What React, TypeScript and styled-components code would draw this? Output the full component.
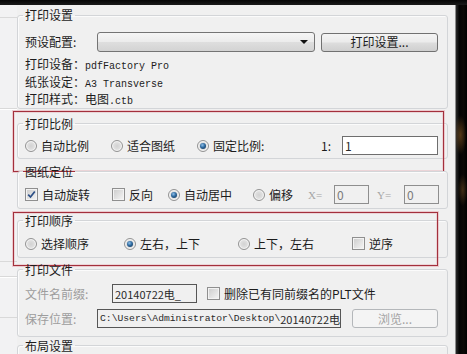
import styled, { createGlobalStyle, css } from 'styled-components'

const GlobalStyle = createGlobalStyle`
  html, body {
    margin: 0;
    padding: 0;
  }
  body {
    width: 467px;
    height: 354px;
    overflow: hidden;
    background: #f0f0f0;
    font-family: 'Noto Sans CJK SC', 'Noto Sans', sans-serif;
    font-size: 12px;
    line-height: 16px;
    color: #1c1c1c;
  }
`

const Page = styled.div`
  display: flex;
  flex-direction: column;
  height: 354px;
  overflow: hidden;
`

const TopBar = styled.div`
  flex: none;
  height: 5px;
  background: linear-gradient(#050505, #1a1a1a);
`

const Body = styled.div`
  flex: 1;
  display: flex;
  min-height: 0;
`

const LeftStrip = styled.div`
  flex: none;
  width: 17px;
  display: flex;
  flex-direction: column;
  background: #f2f2f3;
`

const LeftPanel = styled.div<{ $mt: number; $h: number }>`
  flex: none;
  margin-top: ${(p) => p.$mt}px;
  height: ${(p) => p.$h}px;
  border-top: 1px solid #d9d9d9;
  border-bottom: 1px solid #d9d9d9;
  box-shadow: 0 1px 0 #fff;
`

const Main = styled.div`
  flex: none;
  width: 431px;
  display: flex;
  flex-direction: column;
`

const Gutter = styled.div`
  flex: 1;
`

const RightEdge = styled.div`
  flex: none;
  width: 11px;
  border-left: 1px solid #8d8d8d;
  background:
    radial-gradient(ellipse 6px 20px at 40% 130px, rgba(150, 100, 40, 0.55), transparent),
    radial-gradient(ellipse 5px 16px at 60% 185px, rgba(130, 90, 40, 0.45), transparent),
    linear-gradient(to right, #2a2a2a, #030303 30%, #0b0805 70%, #000);
`

const Section = styled.div<{ $mt: number }>`
  position: relative;
  flex: none;
  margin-top: ${(p) => p.$mt}px;
`

const Group = styled.fieldset<{ $pt: number; $pb: number }>`
  margin: 0;
  min-width: 0;
  padding: ${(p) => p.$pt}px 7px ${(p) => p.$pb}px 7px;
  border: 1px solid #d3d5d8;
  border-radius: 3px;
  box-shadow: inset 1px 1px 0 #fbfbfb;
`

const Legend = styled.legend`
  margin-left: -2px;
  padding: 0 2px;
  height: 16px;
  line-height: 16px;
`

const Highlight = styled.div<{ $top: number; $w: number; $h: number }>`
  position: absolute;
  left: -4px;
  top: ${(p) => p.$top}px;
  width: ${(p) => p.$w}px;
  height: ${(p) => p.$h}px;
  box-sizing: border-box;
  border: 1px solid #a3303c;
  box-shadow: 0 0 0 1px rgba(226, 130, 140, 0.35), inset 0 0 0 1px rgba(226, 150, 160, 0.3);
  pointer-events: none;
`

const Row = styled.div<{ $h: number; $mt?: number }>`
  display: flex;
  align-items: center;
  height: ${(p) => p.$h}px;
  margin-top: ${(p) => p.$mt ?? 0}px;
`

const InfoList = styled.div`
  display: flex;
  flex-direction: column;
  margin-top: 3px;
`

const InfoRow = styled.div`
  height: 17.5px;
  line-height: 17.5px;
  overflow: hidden;
  white-space: nowrap;
`

const Label = styled.span<{ $w?: number; $dim?: boolean }>`
  flex: none;
  width: ${(p) => (p.$w ? `${p.$w}px` : 'auto')};
  color: ${(p) => (p.$dim ? '#9d9d9d' : 'inherit')};
  white-space: nowrap;
`

const Mono = styled.span`
  font-family: 'Liberation Mono', 'DejaVu Sans Mono', monospace;
  font-size: 10px;
  line-height: 1;
`

const Option = styled.label<{ $w?: number }>`
  flex: none;
  display: flex;
  align-items: center;
  gap: 4px;
  width: ${(p) => (p.$w ? `${p.$w}px` : 'auto')};
  white-space: nowrap;
`

const Radio = styled.span<{ $on?: boolean }>`
  flex: none;
  display: inline-flex;
  align-items: center;
  justify-content: center;
  width: 10px;
  height: 10px;
  border: 1px solid #939393;
  border-radius: 50%;
  background: radial-gradient(circle, #d2d2d2 0, #dedede 45%, #f6f6f6 100%);
  box-shadow: inset 0 0 0 1px #f4f4f4;
  ${(p) =>
    p.$on &&
    css`
      &::after {
        content: '';
        width: 6px;
        height: 6px;
        border-radius: 50%;
        background: radial-gradient(circle at 40% 35%, #8fc0ea 0, #2f6a9f 45%, #0f2c4a 100%);
      }
    `}
`

const Check = styled.span`
  flex: none;
  display: inline-flex;
  align-items: center;
  justify-content: center;
  width: 11px;
  height: 11px;
  border: 1px solid #8f8f8f;
  background: linear-gradient(135deg, #cbcbcb, #f6f6f6);
  box-shadow: inset 0 0 0 1px #f3f3f3;
`

const Combo = styled.div`
  flex: none;
  display: flex;
  align-items: center;
  justify-content: flex-end;
  box-sizing: border-box;
  width: 218px;
  height: 20px;
  padding-right: 6px;
  border: 1px solid #747474;
  border-radius: 3px;
  background: linear-gradient(#f5f5f5, #ececec 48%, #dedede 52%, #d3d3d3);
`

const Arrow = styled.span`
  width: 0;
  height: 0;
  border-left: 4px solid transparent;
  border-right: 4px solid transparent;
  border-top: 4px solid #111;
`

const Button = styled.div<{ $w: number; $disabled?: boolean; $ml?: number }>`
  flex: none;
  display: flex;
  align-items: center;
  justify-content: center;
  box-sizing: border-box;
  width: ${(p) => p.$w}px;
  height: 19px;
  margin-left: ${(p) => p.$ml ?? 0}px;
  border: 1px solid ${(p) => (p.$disabled ? '#b4b7ba' : '#717171')};
  border-radius: 3px;
  color: ${(p) => (p.$disabled ? '#a3a3a3' : '#1c1c1c')};
  background: ${(p) =>
    p.$disabled ? '#f4f4f4' : 'linear-gradient(#f4f4f4, #ebebeb 48%, #dddddd 52%, #cfcfcf)'};
`

const Field = styled.div<{ $w: number; $tone: 'white' | 'dim' | 'file'; $ml?: number; $mr?: number }>`
  flex: none;
  box-sizing: border-box;
  display: flex;
  align-items: center;
  width: ${(p) => p.$w}px;
  height: 19px;
  margin-left: ${(p) => p.$ml ?? 0}px;
  margin-right: ${(p) => p.$mr ?? 0}px;
  padding-left: 2px;
  overflow: hidden;
  white-space: nowrap;
  border: 1px solid ${(p) => (p.$tone === 'dim' ? '#8e8e8e' : p.$tone === 'file' ? '#565656' : '#6e6e6e')};
  background: ${(p) => (p.$tone === 'white' ? '#fff' : '#f0f0f0')};
  color: ${(p) => (p.$tone === 'dim' ? '#7a7a7a' : '#2a2a2a')};
`

const Axis = styled.span<{ $w: number; $ml?: number }>`
  flex: none;
  width: ${(p) => p.$w}px;
  margin-left: ${(p) => p.$ml ?? 0}px;
  font-family: 'Liberation Serif', 'DejaVu Serif', serif;
  font-size: 11px;
  color: #a5a5a5;
`

const PathMono = styled.span`
  font-family: 'Liberation Mono', 'DejaVu Sans Mono', monospace;
  font-size: 9.7px;
  color: #2a2a2a;
`

const FileText = styled.span`
  font-size: 11px;
`

const Spacer = styled.span`
  flex: 1;
`

const CheckMark = () => (
  <svg width="9" height="9" viewBox="0 0 9 9">
    <path d="M1.2 4.6 L3.5 7 L7.8 1.4" fill="none" stroke="#2c4f86" strokeWidth="1.7" />
  </svg>
)

export default function App() {
  return (
    <>
      <GlobalStyle />
      <Page>
        <TopBar />
        <Body>
          <LeftStrip>
            <LeftPanel $mt={12} $h={90} />
            <LeftPanel $mt={152} $h={14} />
            <LeftPanel $mt={40} $h={60} />
          </LeftStrip>
          <Main>
            <Section $mt={2}>
              <Group $pt={9} $pb={0}>
                <Legend>打印设置</Legend>
                <Row $h={20}>
                  <Label $w={72}>预设配置:</Label>
                  <Combo>
                    <Arrow />
                  </Combo>
                  <Button $w={117} $ml={6}>
                    打印设置...
                  </Button>
                </Row>
                <InfoList>
                  <InfoRow>
                    打印设备：<Mono>pdfFactory Pro</Mono>
                  </InfoRow>
                  <InfoRow>
                    纸张设定：<Mono>A3 Transverse</Mono>
                  </InfoRow>
                  <InfoRow>
                    打印样式：电图<Mono>.ctb</Mono>
                  </InfoRow>
                </InfoList>
              </Group>
            </Section>

            <Section $mt={7}>
              <Group $pt={5} $pb={3}>
                <Legend>打印比例</Legend>
                <Row $h={18}>
                  <Option $w={86}>
                    <Radio />
                    自动比例
                  </Option>
                  <Option $w={86}>
                    <Radio />
                    适合图纸
                  </Option>
                  <Option>
                    <Radio $on />
                    固定比例:
                  </Option>
                  <Spacer />
                  <Label $w={21}>1:</Label>
                  <Field $w={96} $tone="white" $mr={2}>
                    1
                  </Field>
                </Row>
              </Group>
              <Highlight $top={-5} $w={431} $h={61} />
            </Section>

            <Section $mt={5}>
              <Group $pt={5} $pb={3}>
                <Legend>图纸定位</Legend>
                <Row $h={20}>
                  <Option $w={87}>
                    <Check>
                      <CheckMark />
                    </Check>
                    自动旋转
                  </Option>
                  <Option $w={56}>
                    <Check />
                    反向
                  </Option>
                  <Option $w={85}>
                    <Radio $on />
                    自动居中
                  </Option>
                  <Option $w={55}>
                    <Radio />
                    偏移
                  </Option>
                  <Axis $w={26}>X=</Axis>
                  <Field $w={35} $tone="dim">
                    0
                  </Field>
                  <Axis $w={27} $ml={8}>
                    Y=
                  </Axis>
                  <Field $w={35} $tone="dim">
                    0
                  </Field>
                </Row>
              </Group>
            </Section>

            <Section $mt={4}>
              <Group $pt={6} $pb={4}>
                <Legend>打印顺序</Legend>
                <Row $h={18}>
                  <Option $w={99}>
                    <Radio />
                    选择顺序
                  </Option>
                  <Option $w={114}>
                    <Radio $on />
                    左右，上下
                  </Option>
                  <Option $w={114}>
                    <Radio />
                    上下，左右
                  </Option>
                  <Option>
                    <Check />
                    逆序
                  </Option>
                </Row>
              </Group>
              <Highlight $top={-1} $w={425} $h={54} />
            </Section>

            <Section $mt={4}>
              <Group $pt={6} $pb={7}>
                <Legend>打印文件</Legend>
                <Row $h={20}>
                  <Label $w={87} $dim>
                    文件名前缀:
                  </Label>
                  <Field $w={85} $tone="file">
                    <FileText>20140722电_</FileText>
                  </Field>
                  <Option style={{ marginLeft: 10 }}>
                    <Check />
                    删除已有同前缀名的PLT文件
                  </Option>
                </Row>
                <Row $h={20} $mt={5}>
                  <Label $w={72} $dim>
                    保存位置:
                  </Label>
                  <Field $w={244} $tone="file">
                    <PathMono>C:\Users\Administrator\Desktop\</PathMono>
                    <FileText>20140722电</FileText>
                  </Field>
                  <Button $w={86} $ml={11} $disabled>
                    浏览...
                  </Button>
                </Row>
              </Group>
            </Section>

            <Section $mt={1}>
              <Group $pt={6} $pb={20}>
                <Legend>布局设置</Legend>
              </Group>
            </Section>
          </Main>
          <Gutter />
          <RightEdge />
        </Body>
      </Page>
    </>
  )
}
